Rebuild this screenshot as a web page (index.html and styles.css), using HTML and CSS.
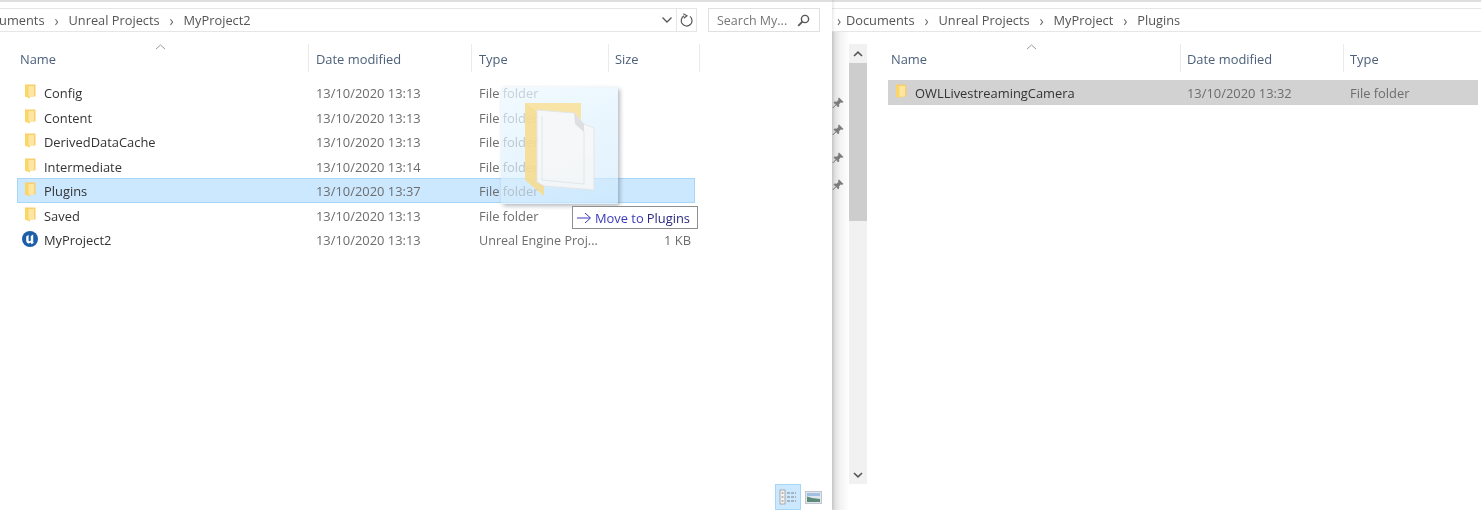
FILE: index.html
```html
<!DOCTYPE html>
<html lang="en">
<head>
    <meta charset="UTF-8">
    <title>File Explorer</title>
    <link rel="stylesheet" href="styles.css">
</head>
<body>
    <svg class="defs" width="0" height="0">
        <symbol id="folder" viewBox="0 0 12 15">
            <path d="M1 0.5H11.5V12.5H1z" fill="#f8cf6c"/>
            <path d="M1 0.5L6 3V14.5L1 12.5z" fill="#fbd568"/>
            <path d="M4.5 2H10V12.5H4.5z" fill="#fde6a2"/>
        </symbol>
        <symbol id="pin" viewBox="0 0 12 12">
            <path d="M7 0.8L11.2 5 10.2 5.6 8.8 5.2 6.8 7.2 7 9.2 6 10 4.3 7.7 1 11 .8 10.8 4 7.4 1.8 5.8 2.6 4.8 4.6 5 6.6 3 6.3 1.6z" fill="#7b7b7b" stroke="#7b7b7b" stroke-width=".5"/>
        </symbol>
    </svg>

    <div class="panes">
        <section class="pane pane-left">
            <div class="top-rule"></div>
            <div class="toolbar">
                <div class="address">
                    <div class="crumbs crumbs-left">
                        <span>Documents</span><i>&rsaquo;</i><span>Unreal Projects</span><i>&rsaquo;</i><span>MyProject2</span>
                    </div>
                    <svg class="chev" width="12" height="8" viewBox="0 0 12 8"><path d="M1.5 1.5L6 6l4.5-4.5" fill="none" stroke="#555" stroke-width="1.3"/></svg>
                    <div class="refresh">
                        <svg width="15" height="15" viewBox="0 0 15 15"><path d="M5.2 2.8A5.4 5.4 0 1 0 11 3.4" fill="none" stroke="#555" stroke-width="1.2"/><path d="M4.4 .8L8 2.8 4.8 5.2" fill="none" stroke="#555" stroke-width="1.1"/></svg>
                    </div>
                </div>
                <div class="search">
                    <span>Search My...</span>
                    <svg width="13" height="13" viewBox="0 0 13 13"><circle cx="8" cy="5" r="3.6" fill="none" stroke="#555" stroke-width="1.4"/><path d="M5.4 7.6L1.2 11.8" stroke="#555" stroke-width="1.8"/></svg>
                </div>
            </div>

            <div class="list list-left">
                <div class="cols head">
                    <div class="hcell">Name<svg class="sort" width="11" height="6" viewBox="0 0 11 6"><path d="M1 5L5.5 1 10 5" fill="none" stroke="#9a9a9a"/></svg></div>
                    <div class="hcell">Date modified</div>
                    <div class="hcell">Type</div>
                    <div class="hcell">Size</div>
                </div>
                <div class="rows">
                    <div class="cols row"><div class="name"><svg class="ico"><use href="#folder"/></svg>Config</div><div>13/10/2020 13:13</div><div>File folder</div><div></div></div>
                    <div class="cols row"><div class="name"><svg class="ico"><use href="#folder"/></svg>Content</div><div>13/10/2020 13:13</div><div>File folder</div><div></div></div>
                    <div class="cols row"><div class="name"><svg class="ico"><use href="#folder"/></svg>DerivedDataCache</div><div>13/10/2020 13:13</div><div>File folder</div><div></div></div>
                    <div class="cols row"><div class="name"><svg class="ico"><use href="#folder"/></svg>Intermediate</div><div>13/10/2020 13:14</div><div>File folder</div><div></div></div>
                    <div class="cols row is-target"><div class="name"><svg class="ico"><use href="#folder"/></svg>Plugins</div><div>13/10/2020 13:37</div><div>File folder</div><div></div></div>
                    <div class="cols row"><div class="name"><svg class="ico"><use href="#folder"/></svg>Saved</div><div>13/10/2020 13:13</div><div>File folder</div><div></div></div>
                    <div class="cols row">
                        <div class="name">
                            <svg class="ico ico-ue" viewBox="0 0 16 16"><circle cx="8" cy="8" r="8" fill="#1c5fa8"/><path d="M4.2 5.4L6.6 3.8V9.4Q6.6 10.4 7.6 10.2L8.8 9.4V5L11.2 3.4V11.4L12.4 10.6Q11.4 13 9.4 13.2L8.8 11.6Q7.4 12.8 5.8 12.2 4.2 11.6 4.2 9.8z" fill="#fff"/></svg>MyProject2
                        </div>
                        <div>13/10/2020 13:13</div><div class="long">Unreal Engine Proj...</div><div class="size">1 KB</div>
                    </div>
                </div>
            </div>

            <div class="views">
                <div class="view view-on">
                    <svg width="18" height="16" viewBox="0 0 18 16">
                        <rect x="1" y="1" width="5" height="14" fill="#f4f4f4" stroke="#9a9a9a" stroke-width=".8"/>
                        <path d="M2.5 4h2M2.5 8h2M2.5 12h2M8 4h9M8 8h9M8 12h9" stroke="#808080" stroke-width="1.1" stroke-dasharray="3 1"/>
                    </svg>
                </div>
                <div class="view">
                    <svg width="17" height="13" viewBox="0 0 17 13">
                        <rect x=".5" y=".5" width="16" height="12" fill="#dce6ee" stroke="#c4c4cc"/>
                        <rect x="2" y="2" width="13" height="3" fill="#a3bfe2"/>
                        <path d="M2 5.5L7 7l8 1v3H2z" fill="#5f8a78"/>
                    </svg>
                </div>
            </div>

            <div class="drag-ghost">
                <svg width="72" height="96" viewBox="0 0 72 96">
                    <path d="M1 1H57V62H1z" fill="#fbe29c"/>
                    <path d="M1 1L20 14V94L1 78z" fill="#f8dc8e"/>
                    <path d="M13 8L50 11 60 22 70 26V88L20 84 13 80z" fill="#f7f8f8" stroke="#e2e4e4"/>
                    <path d="M50 11L51 22 60 30 60 22z" fill="#dcdcdc"/>
                    <path d="M18 14V78L60 82V30" fill="none" stroke="#e4e6e6"/>
                </svg>
            </div>
            <div class="drop-tip">
                <svg width="16" height="12" viewBox="0 0 16 12"><path d="M1 6H14M9 1L14.5 6 9 11" fill="none" stroke="#3a3ab8" stroke-width="1"/></svg>
                <span class="tip-move">Move to</span> <span class="tip-dest">Plugins</span>
            </div>
        </section>

        <section class="pane pane-right">
            <div class="top-rule"></div>
            <div class="toolbar">
                <div class="address">
                    <div class="crumbs crumbs-right">
                        <i>&rsaquo;</i><span>Documents</span><i>&rsaquo;</i><span>Unreal Projects</span><i>&rsaquo;</i><span>MyProject</span><i>&rsaquo;</i><span>Plugins</span>
                    </div>
                </div>
            </div>
            <div class="content">
                <div class="nav-strip">
                    <svg class="pin"><use href="#pin"/></svg>
                    <svg class="pin"><use href="#pin"/></svg>
                    <svg class="pin"><use href="#pin"/></svg>
                    <svg class="pin"><use href="#pin"/></svg>
                </div>
                <div class="scrollbar">
                    <svg width="10" height="6" viewBox="0 0 10 6"><path d="M1 5L5 1.2 9 5" fill="none" stroke="#555" stroke-width="1.6"/></svg>
                    <div class="thumb"></div>
                    <svg class="down" width="10" height="6" viewBox="0 0 10 6"><path d="M1 1L5 4.8 9 1" fill="none" stroke="#555" stroke-width="1.6"/></svg>
                </div>
                <div class="list list-right">
                    <div class="cols head">
                        <div class="hcell">Name<svg class="sort" width="11" height="6" viewBox="0 0 11 6"><path d="M1 5L5.5 1 10 5" fill="none" stroke="#9a9a9a"/></svg></div>
                        <div class="hcell">Date modified</div>
                        <div class="hcell">Type</div>
                    </div>
                    <div class="rows">
                        <div class="cols row is-picked"><div class="name"><svg class="ico"><use href="#folder"/></svg>OWLLivestreamingCamera</div><div>13/10/2020 13:32</div><div>File folder</div></div>
                    </div>
                </div>
            </div>
        </section>
    </div>
</body>
</html>
```

FILE: styles.css
```css
body {
    margin: 0;
    background: #fff;
    font-family: "Open Sans", "Noto Sans", sans-serif;
    font-size: 12.9px;
    color: #6d6d6d;
    overflow: hidden;
    filter: blur(0.35px);
}
.defs {
    position: absolute;
}
.panes {
    display: flex;
    height: 510px;
}
.pane {
    display: flex;
    flex-direction: column;
    position: relative;
}
.pane-left {
    width: 832px;
    flex: none;
    overflow: hidden;
    z-index: 1;
    background: #fff;
    box-shadow: 1px 0 3px rgba(0, 0, 0, .12);
}
.pane-right {
    flex: 1;
    min-width: 0;
    overflow: hidden;
}
.top-rule {
    height: 2px;
    margin-bottom: 6px;
    background: #dedede;
}
.toolbar {
    display: flex;
    height: 24px;
    flex: none;
}
.address {
    flex: 1;
    display: flex;
    align-items: center;
    min-width: 0;
    border-top: 1px solid #e6e6e6;
    border-bottom: 1px solid #e6e6e6;
}
.pane-left .toolbar {
    margin-right: 12px;
    gap: 11px;
}
.pane-left .address {
    border-right: 1px solid #e6e6e6;
}
.crumbs {
    flex: 1;
    display: flex;
    align-items: center;
    white-space: nowrap;
    color: #555;
    font-size: 12.8px;
}
.crumbs i {
    font-style: normal;
    font-size: 14px;
    color: #666;
    width: 24px;
    text-align: center;
}
.crumbs-left {
    margin-left: -24px;
}
.crumbs-right i:first-child {
    width: 14px;
}
.chev {
    margin-right: 3px;
}
.refresh {
    display: flex;
    align-items: center;
    justify-content: center;
    width: 19px;
    height: 100%;
    border-left: 1px solid #e6e6e6;
}
.search {
    width: 112px;
    display: flex;
    align-items: center;
    justify-content: space-between;
    padding: 0 9px 0 8px;
    box-sizing: border-box;
    border: 1px solid #e0e0e0;
    color: #777;
    font-size: 12.5px;
}

.list {
    display: flex;
    flex-direction: column;
}
.list-left {
    padding-left: 17px;
}
.cols {
    display: grid;
    align-items: center;
}
.list-left .cols {
    grid-template-columns: 292px 163px 136px 87px;
    width: 678px;
}
.list-right .cols {
    grid-template-columns: 292px 163px 135px;
    width: 590px;
}
.head {
    height: 28px;
    margin-top: 12px;
    color: #4c607a;
}
.hcell {
    position: relative;
    height: 100%;
    display: flex;
    align-items: center;
    padding: 1px 0 0 7px;
    border-right: 1px solid #ebebeb;
    box-sizing: border-box;
}
.hcell:first-child {
    padding-left: 3px;
}
.list-left .hcell:nth-child(3) {
    margin-right: -1px;
}
.list-left .hcell:nth-child(4) {
    margin-right: -5px;
}
.list-right .hcell {
    margin-right: -1px;
}
.list-right .hcell:last-child {
    border-right: none;
}
.sort {
    position: absolute;
    left: 138px;
    top: 0;
}
.rows {
    margin-top: 8.2px;
}
.row {
    height: 24.5px;
    box-sizing: border-box;
}
.row > div {
    padding-top: 1.2px;
    padding-left: 7px;
    white-space: nowrap;
    overflow: hidden;
}
.row > .name {
    display: flex;
    align-items: center;
    gap: 8px;
    color: #333;
}
.row > .size {
    padding-left: 0;
    padding-right: 4px;
    text-align: right;
}
.row > .long {
    font-size: 12.6px;
}
.ico {
    width: 12px;
    height: 15px;
    flex: none;
    margin-top: -3px;
}
.ico-ue {
    width: 16px;
    height: 16px;
    margin: -2px -2px 0 -2px;
}
.is-target {
    background: #cce8ff;
    box-shadow: inset 0 0 0 1px #a6d6f8;
}
.is-picked {
    background: #d2d2d2;
}

.views {
    margin-top: auto;
    display: flex;
    justify-content: flex-end;
    align-items: center;
    gap: 4px;
    height: 26px;
    padding-right: 10px;
}
.view {
    display: flex;
    align-items: center;
    justify-content: center;
    width: 17px;
    height: 26px;
}
.view-on {
    width: 26px;
    background: #cce8ff;
    box-shadow: inset 0 0 0 1px #a6d6f8;
}

/* drag ghost + tooltip sit on top of the list */
.drag-ghost {
    position: absolute;
    left: 501px;
    top: 87px;
    width: 117px;
    height: 117px;
    box-sizing: border-box;
    padding: 15px 0 0 23px;
    background: linear-gradient(160deg, rgba(236, 248, 255, .72), rgba(205, 232, 252, .62));
    border-radius: 2px;
    box-shadow: 2px 2px 4px rgba(90, 100, 110, .45);
}
.drag-ghost svg {
    opacity: .88;
}
.drop-tip {
    position: absolute;
    left: 572px;
    top: 206px;
    width: 126px;
    height: 23px;
    box-sizing: border-box;
    display: flex;
    align-items: center;
    gap: 3px;
    padding-left: 3px;
    background: #fff;
    border: 1px solid #8e8e8e;
    white-space: nowrap;
}
.tip-move {
    color: #3a3ab8;
}
.tip-dest {
    color: #2a2a80;
}

.content {
    flex: 1;
    display: flex;
    min-height: 0;
    background: linear-gradient(90deg, #d8d8d8, #f2f2f2 8px, #fff 17px);
}
.nav-strip {
    width: 17px;
    flex: none;
    display: flex;
    flex-direction: column;
    align-items: center;
    gap: 15.4px;
    padding: 65px 6px 0 0;
    box-sizing: border-box;
}
.pin {
    width: 12px;
    height: 12px;
}
.scrollbar {
    width: 18px;
    height: 440px;
    margin-top: 12px;
    flex: none;
    background: #f1f1f1;
    display: flex;
    flex-direction: column;
    align-items: center;
    padding-top: 7px;
    box-sizing: border-box;
}
.thumb {
    width: 100%;
    height: 158px;
    margin-top: 6px;
    background: #cdcdcd;
}
.down {
    margin-top: auto;
    margin-bottom: 6px;
}
.list-right {
    padding-left: 21px;
    background: #fff;
    flex: 1;
}
```
